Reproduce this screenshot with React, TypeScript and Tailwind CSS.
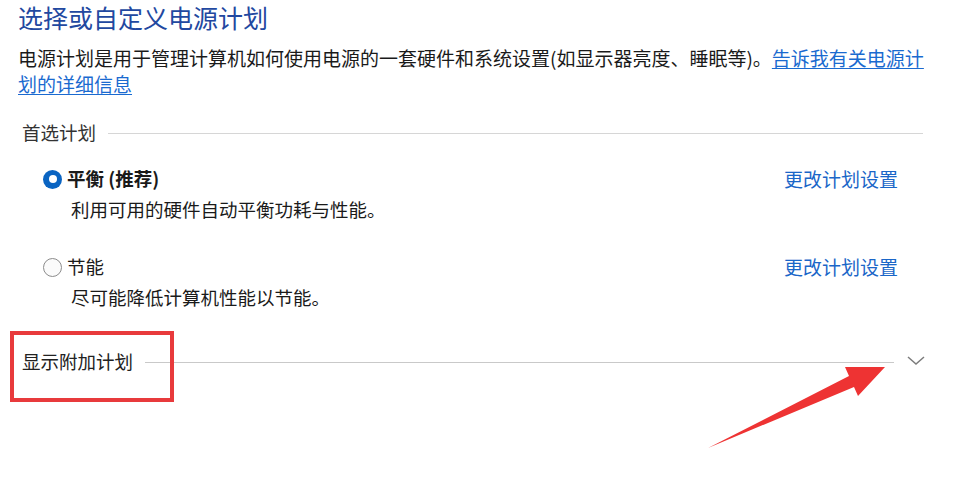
const font = { fontFamily: '"Noto Sans CJK SC", "Noto Sans", sans-serif' }

function Radio({ checked }: { checked: boolean }) {
  if (checked) {
    return (
      <span className="w-[19px] h-[19px] rounded-full bg-[#0a64c2] flex items-center justify-center shrink-0">
        <span className="w-[8px] h-[8px] rounded-full bg-white" />
      </span>
    )
  }
  return <span className="w-[19px] h-[19px] rounded-full border border-[#8c8c8c] bg-[#fbfbfb] shrink-0" />
}

export default function App() {
  const plans = [
    { name: "平衡 (推荐)", desc: "利用可用的硬件自动平衡功耗与性能。", checked: true },
    { name: "节能", desc: "尽可能降低计算机性能以节能。", checked: false },
  ]

  return (
    <div className="relative w-[968px] h-[486px] bg-white overflow-hidden text-[#1a1a1a]" style={font}>
      <div className="pl-[18px]">
        <h1 className="text-[25px] leading-[34px] font-normal text-[#2248a0]">选择或自定义电源计划</h1>

        <p className="mt-[11px] w-[914px] text-[19px] leading-[26px]">
          电源计划是用于管理计算机如何使用电源的一套硬件和系统设置(如显示器亮度、睡眠等)。
          <a className="text-[#1a6ad0] underline underline-offset-2">告诉我有关电源计划的详细信息</a>
        </p>

        <div className="w-[905px]">
          {/* 首选计划 */}
          <div className="mt-[23px] flex items-center h-[26px] pl-[4px]">
            <span className="text-[18.5px] text-[#333]">首选计划</span>
            <div className="flex-1 ml-[12px] h-px bg-[#d6d6d6]" />
          </div>

          <div className="mt-[20px] flex flex-col gap-[32px]">
            {plans.map((p) => (
              <div key={p.name}>
                <div className="flex items-center justify-between h-[26px] pl-[25px] pr-[25px]">
                  <div className="flex items-center gap-[5px]">
                    <Radio checked={p.checked} />
                    <span className={`text-[18.5px] ${p.checked ? "font-bold" : ""}`}>{p.name}</span>
                  </div>
                  <a className="text-[19px] text-[#1a66c8]">更改计划设置</a>
                </div>
                <div className="mt-[4px] pl-[53px] h-[26px] leading-[26px] text-[18.5px]">{p.desc}</div>
              </div>
            ))}
          </div>

          {/* 显示附加计划 */}
          <div className="relative mt-[39px] flex items-center h-[26px] pl-[4px]">
            <span className="text-[18.5px] text-[#222]">显示附加计划</span>
            <div className="flex-1 ml-[12px] mr-[13px] h-px bg-[#c9c9c9]" />
            <svg width="18" height="9" viewBox="0 0 18 9" className="-mt-[3px] mr-[-2px]">
              <polyline points="1,1 9,8 17,1" fill="none" stroke="#7c7c7c" strokeWidth="1.5" />
            </svg>
            <div className="absolute left-[-8px] top-[-18px] w-[164px] h-[71px] border-[4px] border-[#e83a3c]" />
          </div>
        </div>
      </div>

      <svg className="absolute inset-0 pointer-events-none" width="968" height="486" viewBox="0 0 968 486">
        <polygon points="885,367 845,367 849,376 708,448 854,387 858,396" fill="#ee3333" />
      </svg>
    </div>
  )
}
